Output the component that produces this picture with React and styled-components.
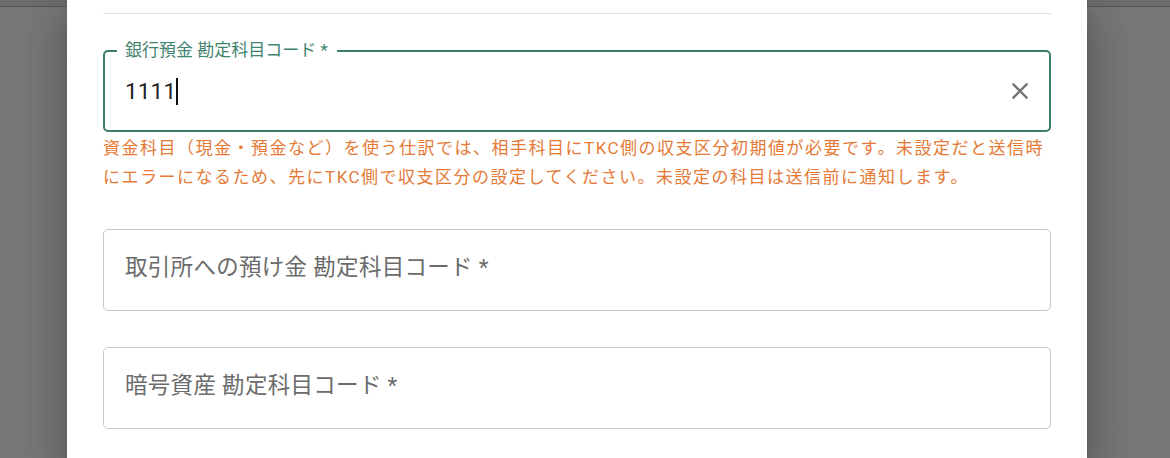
import React from "react";
import styled, { createGlobalStyle } from "styled-components";

const GlobalStyle = createGlobalStyle`
   html, body {
      margin: 0;
      padding: 0;
   }
   body {
      font-family: Roboto, "Noto Sans CJK JP", sans-serif;
   }
`;

const Backdrop = styled.div`
   position: relative;
   width: 1170px;
   height: 458px;
   overflow: hidden;
   background: #777777;
   display: flex;
   padding-left: 67px;
   box-sizing: border-box;
`;

const HeaderBehind = styled.div`
   position: absolute;
   top: 0;
   left: 0;
   right: 0;
   height: 6px;
   background: #6c6c6c;
   border-bottom: 1px solid #575757;
`;

const Dialog = styled.div`
   position: relative;
   width: 1020px;
   height: 100%;
   box-sizing: border-box;
   padding: 0 36px;
   background: #ffffff;
   box-shadow: 0 11px 15px -7px rgba(0, 0, 0, 0.2),
      0 24px 38px 3px rgba(0, 0, 0, 0.14), 0 9px 46px 8px rgba(0, 0, 0, 0.12);
`;

const Divider = styled.hr`
   margin: 13px 0 0;
   border: 0;
   border-top: 1px solid #e0e0e0;
`;

const FieldGroup = styled.div`
   margin-top: ${props => props.gap}px;
`;

const FieldBox = styled.div`
   position: relative;
   box-sizing: border-box;
   height: 82px;
   display: flex;
   align-items: center;
   border-radius: 5px;
   border: ${props => (props.focused ? "2px solid #3a7d69" : "1px solid #c8c8c8")};
   padding: ${props => (props.focused ? "0 15px 0 20px" : "0 15px 10px 21px")};
`;

const FloatingLabel = styled.span`
   position: absolute;
   top: -12px;
   left: 12px;
   padding: 0 9px 0 8px;
   background: #ffffff;
   color: #3f8470;
   font-size: 17px;
   line-height: 20px;
`;

const Placeholder = styled.span`
   color: #6b6b6b;
   font-size: 22.5px;
   letter-spacing: 0.3px;
`;

const InputValue = styled.span`
   flex: 1;
   display: flex;
   align-items: center;
   color: #212121;
   font-size: 22.5px;
   letter-spacing: 0.15px;
`;

const Caret = styled.span`
   display: inline-block;
   width: 2px;
   height: 27px;
   background: #111111;
`;

const ClearButton = styled.button`
   display: flex;
   align-items: center;
   justify-content: center;
   padding: 0;
   border: 0;
   background: none;
   color: #757575;
   cursor: pointer;
`;

const HelperText = styled.p`
   margin: 2px 0 0;
   color: #e57a36;
   font-size: 17px;
   line-height: 29px;
   letter-spacing: 1.5px;
`;

function ClearIcon() {
   return (
      <svg width="28" height="28" viewBox="0 0 24 24" fill="currentColor">
         <path d="M19 6.41 17.59 5 12 10.59 6.41 5 5 6.41 10.59 12 5 17.59 6.41 19 12 13.41 17.59 19 19 17.59 13.41 12z" />
      </svg>
   );
}

export default function App() {
   return (
      <>
         <GlobalStyle />
         <Backdrop>
            <HeaderBehind />
            <Dialog>
               <Divider />
               <FieldGroup gap={36}>
                  <FieldBox focused>
                     <FloatingLabel>銀行預金 勘定科目コード *</FloatingLabel>
                     <InputValue>
                        1111
                        <Caret />
                     </InputValue>
                     <ClearButton aria-label="clear">
                        <ClearIcon />
                     </ClearButton>
                  </FieldBox>
                  <HelperText>
                     資金科目（現金・預金など）を使う仕訳では、相手科目にTKC側の収支区分初期値が必要です。未設定だと送信時にエラーになるため、先にTKC側で収支区分の設定してください。未設定の科目は送信前に通知します。
                  </HelperText>
               </FieldGroup>
               <FieldGroup gap={37}>
                  <FieldBox>
                     <Placeholder>取引所への預け金 勘定科目コード *</Placeholder>
                  </FieldBox>
               </FieldGroup>
               <FieldGroup gap={36}>
                  <FieldBox>
                     <Placeholder>暗号資産 勘定科目コード *</Placeholder>
                  </FieldBox>
               </FieldGroup>
            </Dialog>
         </Backdrop>
      </>
   );
}
